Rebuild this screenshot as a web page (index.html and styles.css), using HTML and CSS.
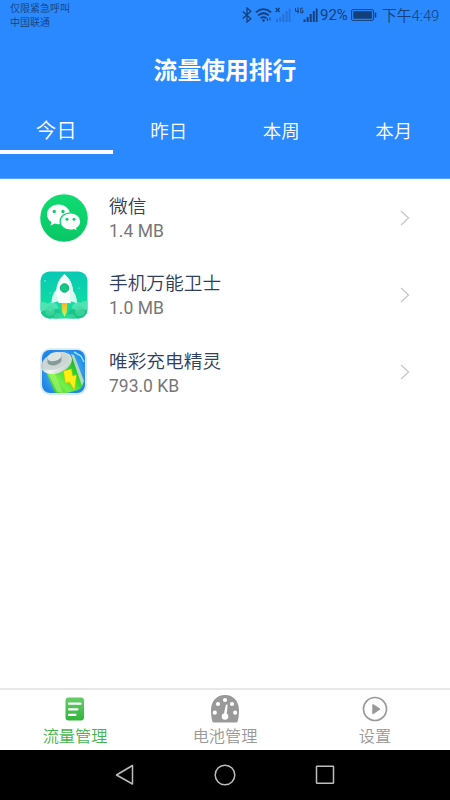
FILE: index.html
```html
<!DOCTYPE html>
<html lang="zh-CN">
<head>
<meta charset="utf-8">
<title>流量使用排行</title>
<link rel="stylesheet" href="styles.css">
</head>
<body>
<div class="screen">
  <header class="header">
    <div class="status">
      <div class="carrier"><div>仅限紧急呼叫</div><div>中国联通</div></div>
      <div class="indicators">
        <svg class="bluetooth" width="10" height="16" viewBox="0 0 10 16" fill="none" stroke="currentColor" stroke-width="1.3"><path d="M.8 4.5l8 7.3L5 15V1l3.8 3.3-8 7.2"/></svg>
        <svg class="wifi" width="17" height="16" viewBox="0 0 17 16" fill="none" stroke="currentColor" stroke-width="1.7"><path d="M.8 5.3Q8.5-1 16.2 5.3M3.1 8.4q5.4-4.3 10.8 0M5.6 11.3q2.9-2.2 5.8 0"/><circle cx="8.5" cy="13.5" r="1.2" fill="currentColor" stroke="none"/><path d="M12.4 11v3M15 10.5v3" stroke-width="1"/></svg>
        <svg class="no-signal" width="16" height="16" viewBox="0 0 16 16"><path d="M.7 1l4 4M4.7 1l-4 4" stroke="currentColor" stroke-width="1.3"/><path d="M1 12h2v3H1zM4.2 10h2v5h-2zM7.4 7h2v8h-2zM10.6 4h2v11h-2zM13.7 1.5h1.8V15h-1.8z" fill="currentColor" opacity=".32"/></svg>
        <svg class="signal" width="23" height="16" viewBox="0 0 23 16" fill="currentColor"><path d="M3 .5v6M.5 1v3.2H4M8 1.2H5.7v4.5H8V3.5H7" fill="none" stroke="currentColor" stroke-width="1"/><path d="M8.5 12.5h2V15h-2zM11.6 10h2v5h-2zM14.7 7h2v8h-2zM17.8 4h2v11h-2zM20.8 1.5h1.8V15h-1.8z"/></svg>
        <span class="percent">92%</span>
        <svg class="battery" width="26" height="14" viewBox="0 0 26 14"><rect x=".6" y="1.6" width="21.8" height="10.8" rx="1.3" fill="none" stroke="currentColor" stroke-width="1"/><path d="M2.3 3.2h18.500v7.6H2.3zM23.7 4.500h1.6v5h-1.6z" fill="currentColor"/></svg>
        <span class="clock">下午4:49</span>
      </div>
    </div>
    <h1 class="title">流量使用排行</h1>
    <nav class="tabs">
      <a class="tab active">今日</a><a class="tab">昨日</a><a class="tab">本周</a><a class="tab">本月</a>
    </nav>
  </header>

  <main class="list">
    <div class="row">
      <svg class="app" viewBox="0 0 48 48">
        <defs><linearGradient id="wx" x2="0" y2="1"><stop stop-color="#10dc72"/><stop offset="1" stop-color="#08c765"/></linearGradient></defs>
        <circle cx="24" cy="24" r="23.8" fill="url(#wx)"/>
        <path d="M18.500 10.500c-6.500 0-11.500 4.400-11.500 9.900 0 3.100 1.700 5.900 4.500 7.700l-1.100 3.700 4.300-2.200c1.200.4 2.500.6 3.800.6 6.400 0 11.500-4.400 11.500-9.800s-5.100-9.900-11.500-9.900z" fill="#fff"/>
        <path d="M30.500 18.800c-5.900 0-10.400 3.800-10.400 8.700s4.500 8.700 10.400 8.700c1.400 0 2.600-.2 3.700-.6l3.400 1.800-.9-3.100c2.500-1.600 4.100-4 4.100-6.800 0-4.900-4.500-8.700-10.300-8.700z" fill="#fff" stroke="#0bd06b" stroke-width="1.200"/>
        <g fill="#0bd06b"><circle cx="14.300" cy="17.500" r="1.700"/><circle cx="23" cy="17.500" r="1.700"/><circle cx="27" cy="25.300" r="1.500"/><circle cx="34" cy="25.300" r="1.500"/></g>
      </svg>
      <div class="info"><div class="name">微信</div><div class="usage">1.4 MB</div></div>
      <svg class="chevron" viewBox="0 0 10 16"><path d="M1 1l7.500 7L1 15"/></svg>
    </div>
    <div class="row">
      <svg class="app" viewBox="0 0 48 48">
        <defs>
          <linearGradient id="sky" x2="0" y2="1"><stop stop-color="#08c8b4"/><stop offset="1" stop-color="#12e59c"/></linearGradient>
          <linearGradient id="flame" x2="0" y2="1"><stop stop-color="#ffb51c"/><stop offset="1" stop-color="#d4f45b"/></linearGradient>
          <clipPath id="tile"><rect x=".5" y=".5" width="47" height="47" rx="9"/></clipPath>
        </defs>
        <g clip-path="url(#tile)">
          <path d="M0 0h48v48H0z" fill="url(#sky)"/>
          <circle cx="5" cy="10" r=".7" fill="#aff"/><circle cx="39" cy="17" r=".6" fill="#aff"/><circle cx="10" cy="22" r=".5" fill="#aff"/>
          <g fill="#4fe3b4"><circle cx="3" cy="38" r="7"/><circle cx="12" cy="37" r="6"/><circle cx="38" cy="37" r="6"/><circle cx="46" cy="38" r="8"/></g>
          <path d="M17 18q-5.500 5-5.500 14l8-2zM31 18q6 5 6 14l-8-2z" fill="#d3f8ee"/>
          <path d="M24.500 3q-8.500 7-8.500 19l2.500 10h12L33 22Q33 10 24.500 3z" fill="#f6fffc"/>
          <path d="M28.500 7.500q2 8 1 25h1L33 22q0-9-4.500-14.500z" fill="#dff5ef"/>
          <circle cx="24.500" cy="17" r="4.300" fill="#10c982" stroke="#079872" stroke-width=".8"/>
          <g fill="#1cc58b"><circle cx="6" cy="45" r="6"/><circle cx="16" cy="43" r="5"/><circle cx="33" cy="43" r="5"/><circle cx="43" cy="45" r="7"/></g>
          <g fill="#48d8a2" opacity=".65"><circle cx="10" cy="40" r="5"/><circle cx="40" cy="40" r="5"/><circle cx="18" cy="46" r="4"/><circle cx="31" cy="47" r="4"/></g>
          <path d="M21.500 32h6l-.8 9-2.200 5-2.300-5z" fill="url(#flame)"/>
        </g>
      </svg>
      <div class="info"><div class="name">手机万能卫士</div><div class="usage">1.0 MB</div></div>
      <svg class="chevron" viewBox="0 0 10 16"><path d="M1 1l7.500 7L1 15"/></svg>
    </div>
    <div class="row">
      <svg class="app" viewBox="0 0 48 48">
        <defs>
          <radialGradient id="water"><stop stop-color="#66d8ff"/><stop offset="1" stop-color="#1f86e6"/></radialGradient>
          <linearGradient id="cell" x1="0" y1="1" x2="1" y2="0"><stop stop-color="#1ba82b"/><stop offset=".35" stop-color="#77f04a"/><stop offset=".65" stop-color="#30d22d"/><stop offset="1" stop-color="#168737"/></linearGradient>
          <linearGradient id="metal" x2="1" y2="1"><stop stop-color="#93a6a6"/><stop offset=".5" stop-color="#f1f6f4"/><stop offset="1" stop-color="#b5c3c0"/></linearGradient>
          <clipPath id="frame"><rect x="2" y="2" width="43" height="43" rx="8"/></clipPath>
        </defs>
        <rect x=".2" y=".2" width="46.800" height="47" rx="10" fill="#dce8f3"/>
        <g clip-path="url(#frame)">
          <path d="M0 0h48v48H0z" fill="url(#water)"/>
          <path d="M34 4l7 4 3 6" fill="none" stroke="#8de4ff" stroke-width="1.500"/>
          <path d="M5 21l9 22q3 4 9 3l15-4q6-3 5-9L32 7z" fill="url(#cell)"/>
          <path d="M8 25l9 19 6 1-9-21z" fill="#a5f66e" opacity=".65"/>
          <path d="M31 6l3 1 10 26-2 5z" fill="#b5d8c0"/>
        </g>
        <ellipse cx="16.500" cy="15" rx="16" ry="10" transform="rotate(-20 16.500 15)" fill="url(#metal)"/>
        <ellipse cx="16" cy="13" rx="14" ry="8" transform="rotate(-20 16 13)" fill="#ccd6d4"/>
        <path d="M7.500 10v5c2 4 11 3 14-2V7z" fill="#87999a"/>
        <ellipse cx="14.500" cy="8.700" rx="7.200" ry="4.300" transform="rotate(-16 14.500 8.700)" fill="#dbe4e1"/>
        <path d="M23.500 23l8-2 1 7 4-1-2 15-5-8-4 1z" fill="#ffed13" stroke="#dfbd00" stroke-width=".5"/>
      </svg>
      <div class="info"><div class="name">唯彩充电精灵</div><div class="usage">793.0 KB</div></div>
      <svg class="chevron" viewBox="0 0 10 16"><path d="M1 1l7.500 7L1 15"/></svg>
    </div>
  </main>

  <nav class="bottom">
    <a class="item selected">
      <svg width="30" height="30" viewBox="0 0 30 30"><defs><linearGradient id="doc" x2="0" y2="1"><stop stop-color="#67cb6b"/><stop offset="1" stop-color="#31b53a"/></linearGradient></defs><rect x="5.500" y="3.500" width="18.500" height="23" rx="3" fill="url(#doc)"/><path d="M9 9.700h11.500M9 15.300h8.500M9 20.800h6.500" stroke="#fff" stroke-width="2.200" stroke-linecap="round"/></svg>
      <span>流量管理</span>
    </a>
    <a class="item">
      <svg width="30" height="30" viewBox="0 0 30 30"><path d="M1 16.500C1 7 6.500 1 15 1s14 6 14 15.500c0 4-.5 8-1.200 10.500q-.4 1.500-1.800 1.500H4q-1.400 0-1.800-1.500C1.500 24.500 1 20.500 1 16.500z" fill="#999"/><g fill="#fff"><circle cx="15" cy="6" r="2.100"/><circle cx="8" cy="10" r="2.100"/><circle cx="22" cy="10" r="2.100"/><circle cx="4.800" cy="18.700" r="2.100"/><circle cx="25.200" cy="18.700" r="2.100"/><circle cx="15" cy="22.500" r="3.300"/><path d="M13.400 22L16 10.500l1.600.3-1 11.500z"/></g></svg>
      <span>电池管理</span>
    </a>
    <a class="item">
      <svg width="30" height="30" viewBox="0 0 30 30"><circle cx="15" cy="15" r="11.500" fill="none" stroke="#999" stroke-width="1.700"/><path d="M13 11l6.500 4.200L13 19.400z" fill="#999" stroke="#999" stroke-width="1.500" stroke-linejoin="round"/></svg>
      <span>设置</span>
    </a>
  </nav>
  <div class="system">
    <svg width="24" height="24" viewBox="0 0 24 24"><path d="M19.500 2.500v18.500L3.500 12z"/></svg>
    <svg width="24" height="24" viewBox="0 0 24 24"><circle cx="12" cy="12" r="9.800"/></svg>
    <svg width="24" height="24" viewBox="0 0 24 24"><rect x="3.500" y="3.300" width="17" height="17" rx=".5"/></svg>
  </div>
</div>
</body>
</html>
```

FILE: styles.css
```css
* { box-sizing: border-box; }
body { margin: 0; font-family: Roboto, "Noto Sans CJK SC", sans-serif; font-weight: 400; }
svg { display: block; flex: none; }
.screen { width: 450px; height: 800px; display: flex; flex-direction: column; background: #fff; overflow: hidden; }
.header { height: 179px; background: #2b89ff; color: #fff; border-bottom: 1px solid #5ba3fb; flex: none; }
.status { height: 32px; display: flex; justify-content: space-between; padding: 0 10px; color: #153f78; }
.carrier { padding-top: 2px; font-size: 10px; line-height: 14px; font-weight: 350; }
.indicators { display: flex; align-items: center; height: 30px; }
.wifi { margin-left: 3px; }
.no-signal { margin-left: 3px; }
.signal { margin-left: 4px; }
.percent { margin-left: 2px; width: 28px; font-size: 15px; line-height: 20px; white-space: nowrap; }
.battery { margin-left: 3px; }
.clock { margin-left: 5px; width: 58px; padding-top: 1px; font-size: 14.800px; line-height: 20px; white-space: nowrap; font-weight: 350; }
.title { margin: 21px 0 0; height: 36px; text-align: center; font-size: 23.800px; line-height: 36px; font-weight: 700; }
.tabs { display: flex; margin-top: 19px; height: 46px; }
.tab { flex: 1; padding-top: 2px; font-size: 18.500px; line-height: 45px; text-align: center; font-weight: 350; }
.tab.active { font-size: 20.500px; line-height: 43px; height: 46px; border-bottom: 4px solid #fff; }
.list { flex: 1; }
.row { height: 77.500px; display: flex; align-items: center; padding: 0 40px 0 39.500px; }
.list .row:first-child { height: 77px; }
.app { width: 48px; height: 48px; }
.info { flex: 1; margin-left: 21.500px; }
.name { padding-top: 1px; color: #2f405a; font-size: 18.700px; line-height: 26px; font-weight: 350; }
.usage { color: #777; font-size: 17.500px; line-height: 22px; }
.chevron { width: 10px; height: 16px; fill: none; stroke: #c7c7c7; stroke-width: 1.300; }
.bottom { height: 62px; display: flex; border-top: 2px solid #e8e8e8; flex: none; }
.item { flex: 1; display: flex; flex-direction: column; align-items: center; padding-top: 4px; color: #999; font-size: 16.200px; line-height: 25px; font-weight: 350; }
.item.selected { color: #43b54c; }
.system { height: 50px; flex: none; background: #000; display: flex; align-items: center; justify-content: center; gap: 76px; }
.system svg { fill: none; stroke: #bdbdbd; stroke-width: 1.500; stroke-linejoin: round; }
```
